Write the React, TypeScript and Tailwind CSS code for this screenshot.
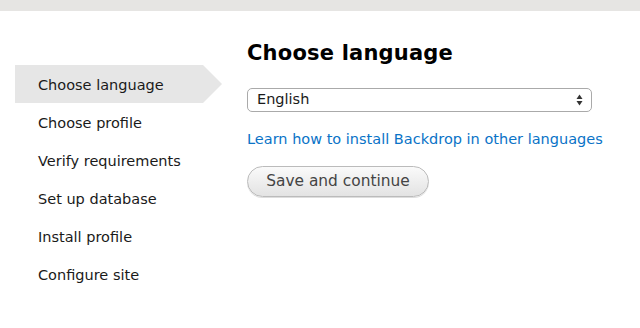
const steps = [
  'Choose language',
  'Choose profile',
  'Verify requirements',
  'Set up database',
  'Install profile',
  'Configure site',
]

function SelectArrows() {
  return (
    <svg width="7" height="12" viewBox="0 0 7 12" className="text-[#333]">
      <path d="M3.5 0.5 L6.5 5 H0.5 Z" fill="currentColor" />
      <path d="M3.5 11.5 L6.5 7 H0.5 Z" fill="currentColor" />
    </svg>
  )
}

export default function App() {
  return (
    <div className="w-[640px] h-[328px] bg-white font-['DejaVu_Sans',sans-serif] text-[#222] overflow-hidden">
      {/* top bar */}
      <div className="h-[11px] bg-[#e6e5e3]" />

      <div className="flex pt-[29px]">
        {/* steps sidebar */}
        <ol className="w-[232px] pt-[25px] shrink-0">
          {steps.map((s, i) =>
            i === 0 ? (
              <li key={s} className="flex h-[38px] ml-[15px]">
                <div className="w-[188px] bg-[#e6e6e6] flex items-center pl-[23px] pt-[3px] text-[14.5px] text-[#1a1a1a]">
                  {s}
                </div>
                <div className="w-0 h-0 border-y-[19px] border-y-transparent border-l-[19px] border-l-[#e6e6e6]" />
              </li>
            ) : (
              <li key={s} className="flex h-[38px] items-center pl-[38px] pt-[3px] text-[14.5px] text-[#1a1a1a]">
                {s}
              </li>
            )
          )}
        </ol>

        {/* main form */}
        <div className="pl-[15px] flex flex-col items-start">
          <h1 className="text-[21px] font-bold text-black leading-[26px] tracking-[0.2px]">Choose language</h1>
          <div className="mt-[22px] w-[345px] h-[24px] border border-[#aaa] rounded-[5px] flex items-center justify-between pl-[9px] pr-[8px] text-[14.5px] text-[#1a1a1a]">
            <span>English</span>
            <SelectArrows />
          </div>
          <a href="#" className="mt-[17px] text-[14.5px] text-[#0a73c7] leading-[20px]">
            Learn how to install Backdrop in other languages
          </a>
          <button className="mt-[17px] w-[182px] h-[31px] rounded-full border border-[#bbb] bg-gradient-to-b from-[#fafafa] to-[#e3e3e3] text-[15.4px] text-[#444] shadow-[0_1px_0_#ddd]">
            Save and continue
          </button>
        </div>
      </div>
    </div>
  )
}
